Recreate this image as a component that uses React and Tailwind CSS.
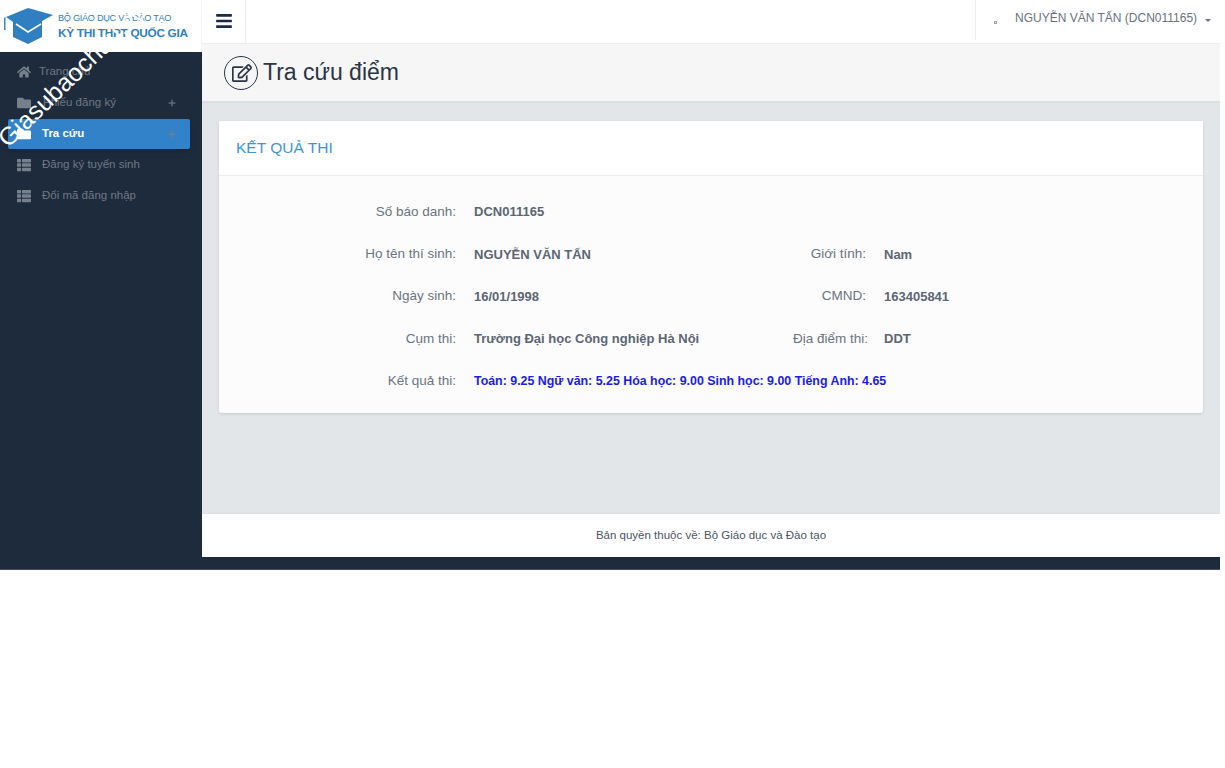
import { FaHome, FaFolder, FaThList, FaBars, FaRegEdit, FaPlus } from "react-icons/fa";

const fields = [
    [["Số báo danh:", "DCN011165"]],
    [["Họ tên thí sinh:", "NGUYỄN VĂN TẤN"], ["Giới tính:", "Nam"]],
    [["Ngày sinh:", "16/01/1998"], ["CMND:", "163405841"]],
    [["Cụm thi:", "Trường Đại học Công nghiệp Hà Nội"], ["Địa điểm thi:", "DDT"]],
];

const menu = [
    { label: "Trang chủ", icon: FaHome, offset: "-ml-[3px]" },
    { label: "Phiếu đăng ký", icon: FaFolder, plus: true, offset: "ml-[1px]" },
    { label: "Tra cứu", icon: FaFolder, plus: true, active: true },
    { label: "Đăng ký tuyển sinh", icon: FaThList },
    { label: "Đổi mã đăng nhập", icon: FaThList },
];

const Logo = () => (
    <div className="h-[52px] bg-white flex items-center border-r border-gray-100">
        <svg width="58" height="52" viewBox="0 0 58 52" className="shrink-0">
            <path d="M4 18 L5.5 17 L5.5 30 L4 30Z" fill="#3a87c8" />
            <path d="M6 17 L28 8 L53 15 L42 21 L42 37 L28 44 L13 37 L13 22Z" fill="#2f7fc1" />
            <path d="M16 24 L28 32 L41 24" fill="none" stroke="#ffffff" strokeWidth="1.6" />
        </svg>
        <div className="font-['Liberation_Sans',sans-serif] text-[#2f7fc1] tracking-[-0.3px] pt-[1px] whitespace-nowrap">
            <div className="text-[9.2px] leading-[13px]">BỘ GIÁO DỤC VÀ ĐÀO TẠO</div>
            <div className="text-[11.8px] leading-[16px] font-bold">KỲ THI THPT QUỐC GIA</div>
        </div>
    </div>
);

const Sidebar = () => (
    <aside className="w-[202px] shrink-0">
        <Logo />
        <nav className="pt-[4px] pl-[8px] pr-[12px]">
            {menu.map((item) => {
                const Icon = item.icon;
                return (
                    <div
                        key={item.label}
                        className={`flex items-center text-[11.5px] rounded-[2px] ${item.active ? "h-[30px] mt-[1px] bg-[#3182c8] text-white font-bold shadow-md" : "h-[31px] text-[#6f7884] font-medium"}`}
                    >
                        <span className={`w-[34px] pl-[9px] ${item.active ? "text-white" : "text-[#76808c]"}`}>
                            <Icon size={14} />
                        </span>
                        <span className={`flex-1 ${item.offset || ""}`}>{item.label}</span>
                        {item.plus && <FaPlus size={8} className={`mr-[14px] ${item.active ? "text-[#6a7f95]" : "text-[#5f6b79]"}`} />}
                    </div>
                );
            })}
        </nav>
    </aside>
);

const Topbar = () => (
    <header className="h-[44px] bg-white border-b border-[#ececec] flex">
        <div className="w-[44px] h-[43px] border-r border-[#ececec] flex items-center justify-center text-[#1e2b3c]">
            <FaBars size={18} className="-mt-[2px]" />
        </div>
        <div className="ml-auto w-[245px] h-[40px] border-l border-[#ececec] flex items-center text-[12px] text-[#6a7280]">
            <span className="ml-[18px] w-[3px] h-[3px] border border-[#9aa2ab] mt-[4px]" />
            <span className="ml-[18px] -mt-[4px] whitespace-nowrap">NGUYỄN VĂN TẤN (DCN011165)</span>
            <span className="ml-[8px] w-0 h-0 border-x-[3px] border-x-transparent border-t-[3px] border-t-[#6a7280]" />
        </div>
    </header>
);

const Row = ({ row }) => (
    <div className="flex h-[42.2px] items-center">
        <div className="w-[237px] text-right text-[13.5px] text-[#6b7480]">{row[0][0]}</div>
        <div className="w-[337px] pl-[18px] text-[13px] font-bold text-[#5d6673]">{row[0][1]}</div>
        {row[1] && (
            <>
                <div className="w-[73px] text-right text-[13.5px] text-[#6b7480] whitespace-nowrap">{row[1][0]}</div>
                <div className="pl-[18px] text-[13px] font-bold text-[#5d6673]">{row[1][1]}</div>
            </>
        )}
    </div>
);

export default function App() {
    return (
        <div className="relative w-[1220px] h-[570px] bg-[#1e2b3c] overflow-hidden flex font-['Liberation_Sans',sans-serif] border-b border-[#46505e]">
            <Sidebar />
            <main className="flex-1 h-[557px] flex flex-col">
                <Topbar />
                <div className="h-[59px] bg-[#f6f6f6] border-b-2 border-[#dcdfe2] flex items-center pl-[22px] text-[#2b3544]">
                    <span className="w-[34px] h-[34px] rounded-full border border-[#2b3544] flex items-center justify-center">
                        <FaRegEdit size={20} className="ml-[2px]" />
                    </span>
                    <h1 className="ml-[5px] text-[23px] leading-none">Tra cứu điểm</h1>
                </div>
                <div className="flex-1 bg-[#e3e6e9] px-[17px] pt-[18px]">
                    <section className="bg-[#fcfcfc] rounded-[2px] shadow-sm">
                        <div className="h-[55px] bg-white border-b border-[#ececec] flex items-center pl-[17px] text-[15.5px] text-[#3f94d6]">KẾT QUẢ THI</div>
                        <div className="pt-[15px] h-[237px]">
                            {fields.map((row) => <Row key={row[0][0]} row={row} />)}
                            <div className="flex h-[42.2px] items-center">
                                <div className="w-[237px] text-right text-[13.5px] text-[#6b7480]">Kết quả thi:</div>
                                <div className="pl-[18px] text-[12.4px] font-bold text-[#1a1aee] whitespace-nowrap">Toán: 9.25 Ngữ văn: 5.25 Hóa học: 9.00 Sinh học: 9.00 Tiếng Anh: 4.65</div>
                            </div>
                        </div>
                    </section>
                </div>
                <footer className="h-[44px] bg-white border-t border-[#dcdfe2] flex items-center justify-center pt-[1px] text-[11.5px] text-[#4b5563]">
                    Bản quyền thuộc về: Bộ Giáo dục và Đào tạo
                </footer>
            </main>
            {/* watermark sits over the logo and menu */}
            <div className="absolute left-[2px] top-[130px] text-[25px] leading-none text-white origin-left -rotate-[44deg] whitespace-nowrap pointer-events-none">Giasubaochau.com</div>
        </div>
    );
}
